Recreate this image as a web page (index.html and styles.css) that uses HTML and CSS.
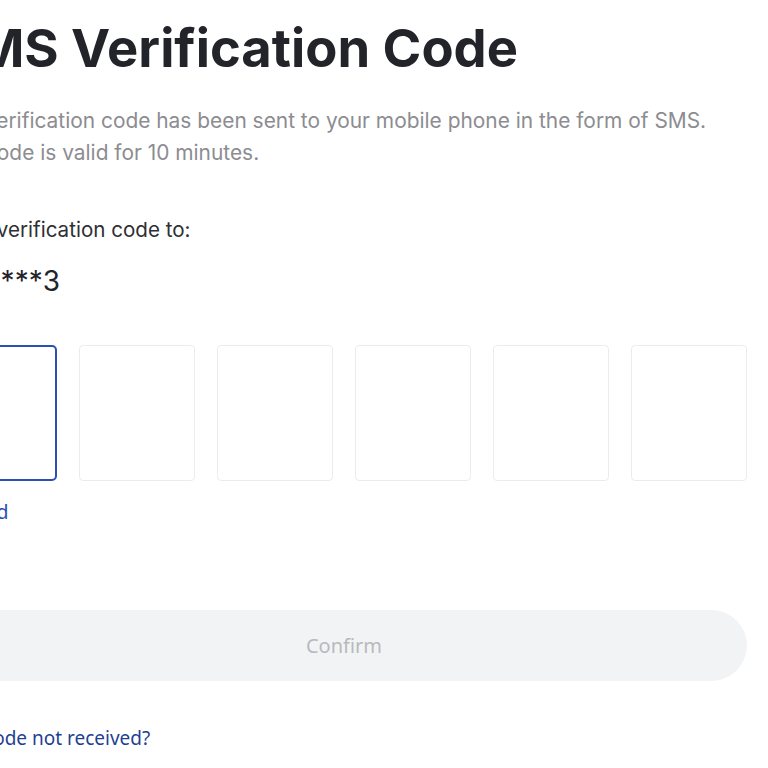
FILE: index.html
```html
<!DOCTYPE html>
<html lang="en">
<head>
<meta charset="utf-8">
<title>SMS Verification Code</title>
<link rel="stylesheet" href="styles.css">
</head>
<body>
<main class="page">
  <h1 class="title">SMS Verification Code</h1>
  <p class="desc">The verification code has been sent to your mobile phone in the form of SMS.<br>The code is valid for 10 minutes.</p>
  <p class="label">Send verification code to:</p>
  <p class="phone">138****3</p>
  <div class="codes">
    <div class="cell cell-active"></div>
    <div class="cell"></div>
    <div class="cell"></div>
    <div class="cell"></div>
    <div class="cell"></div>
    <div class="cell"></div>
  </div>
  <p class="resend">Resend</p>
  <button class="confirm" type="button">Confirm</button>
  <a class="help" href="#">SMS code not received?</a>
</main>
</body>
</html>
```
FILE: styles.css
```css
html, body {
  margin: 0;
  padding: 0;
  background: #ffffff;
  overflow: hidden;
}
body {
  width: 768px;
  height: 768px;
  font-family: Inter, "Noto Sans", sans-serif;
}
.page {
  margin-left: -59px;
  width: 806px;
  display: flex;
  flex-direction: column;
  padding-top: 18px;
}
.title {
  margin: 0;
  font-size: 52.5px;
  line-height: 60px;
  font-weight: 700;
  color: #23242a;
  white-space: nowrap;
}
.desc {
  margin: 27px 0 0;
  font-size: 20.9px;
  line-height: 32px;
  color: #8c8c91;
  white-space: nowrap;
}
.label {
  margin: 46px 0 0;
  font-size: 20.6px;
  line-height: 30px;
  color: #2e2f33;
  white-space: nowrap;
}
.phone {
  margin: 18px 0 0;
  font-size: 28px;
  line-height: 36px;
  color: #23242a;
  white-space: nowrap;
}
.codes {
  margin-top: 46px;
  display: flex;
  gap: 22px;
}
.cell {
  width: 116px;
  height: 136px;
  box-sizing: border-box;
  border: 1px solid #ececec;
  border-radius: 4px;
}
.cell-active {
  border: 2px solid #2b50b4;
  border-radius: 5px;
}
.resend {
  margin: 19px 0 0;
  font-family: "Noto Sans", sans-serif;
  font-size: 19.5px;
  line-height: 24px;
  color: #2b50b4;
  white-space: nowrap;
}
.confirm {
  margin-top: 86px;
  height: 71px;
  width: 806px;
  border: none;
  border-radius: 36px;
  background: #f2f3f5;
  color: #b9b9bd;
  font-family: "Noto Sans", sans-serif;
  font-size: 20px;
  padding: 0;
}
.help {
  margin-top: 45px;
  align-self: flex-start;
  font-family: "Noto Sans", sans-serif;
  font-size: 19px;
  line-height: 24px;
  color: #1f3f93;
  text-decoration: none;
  white-space: nowrap;
}
```
